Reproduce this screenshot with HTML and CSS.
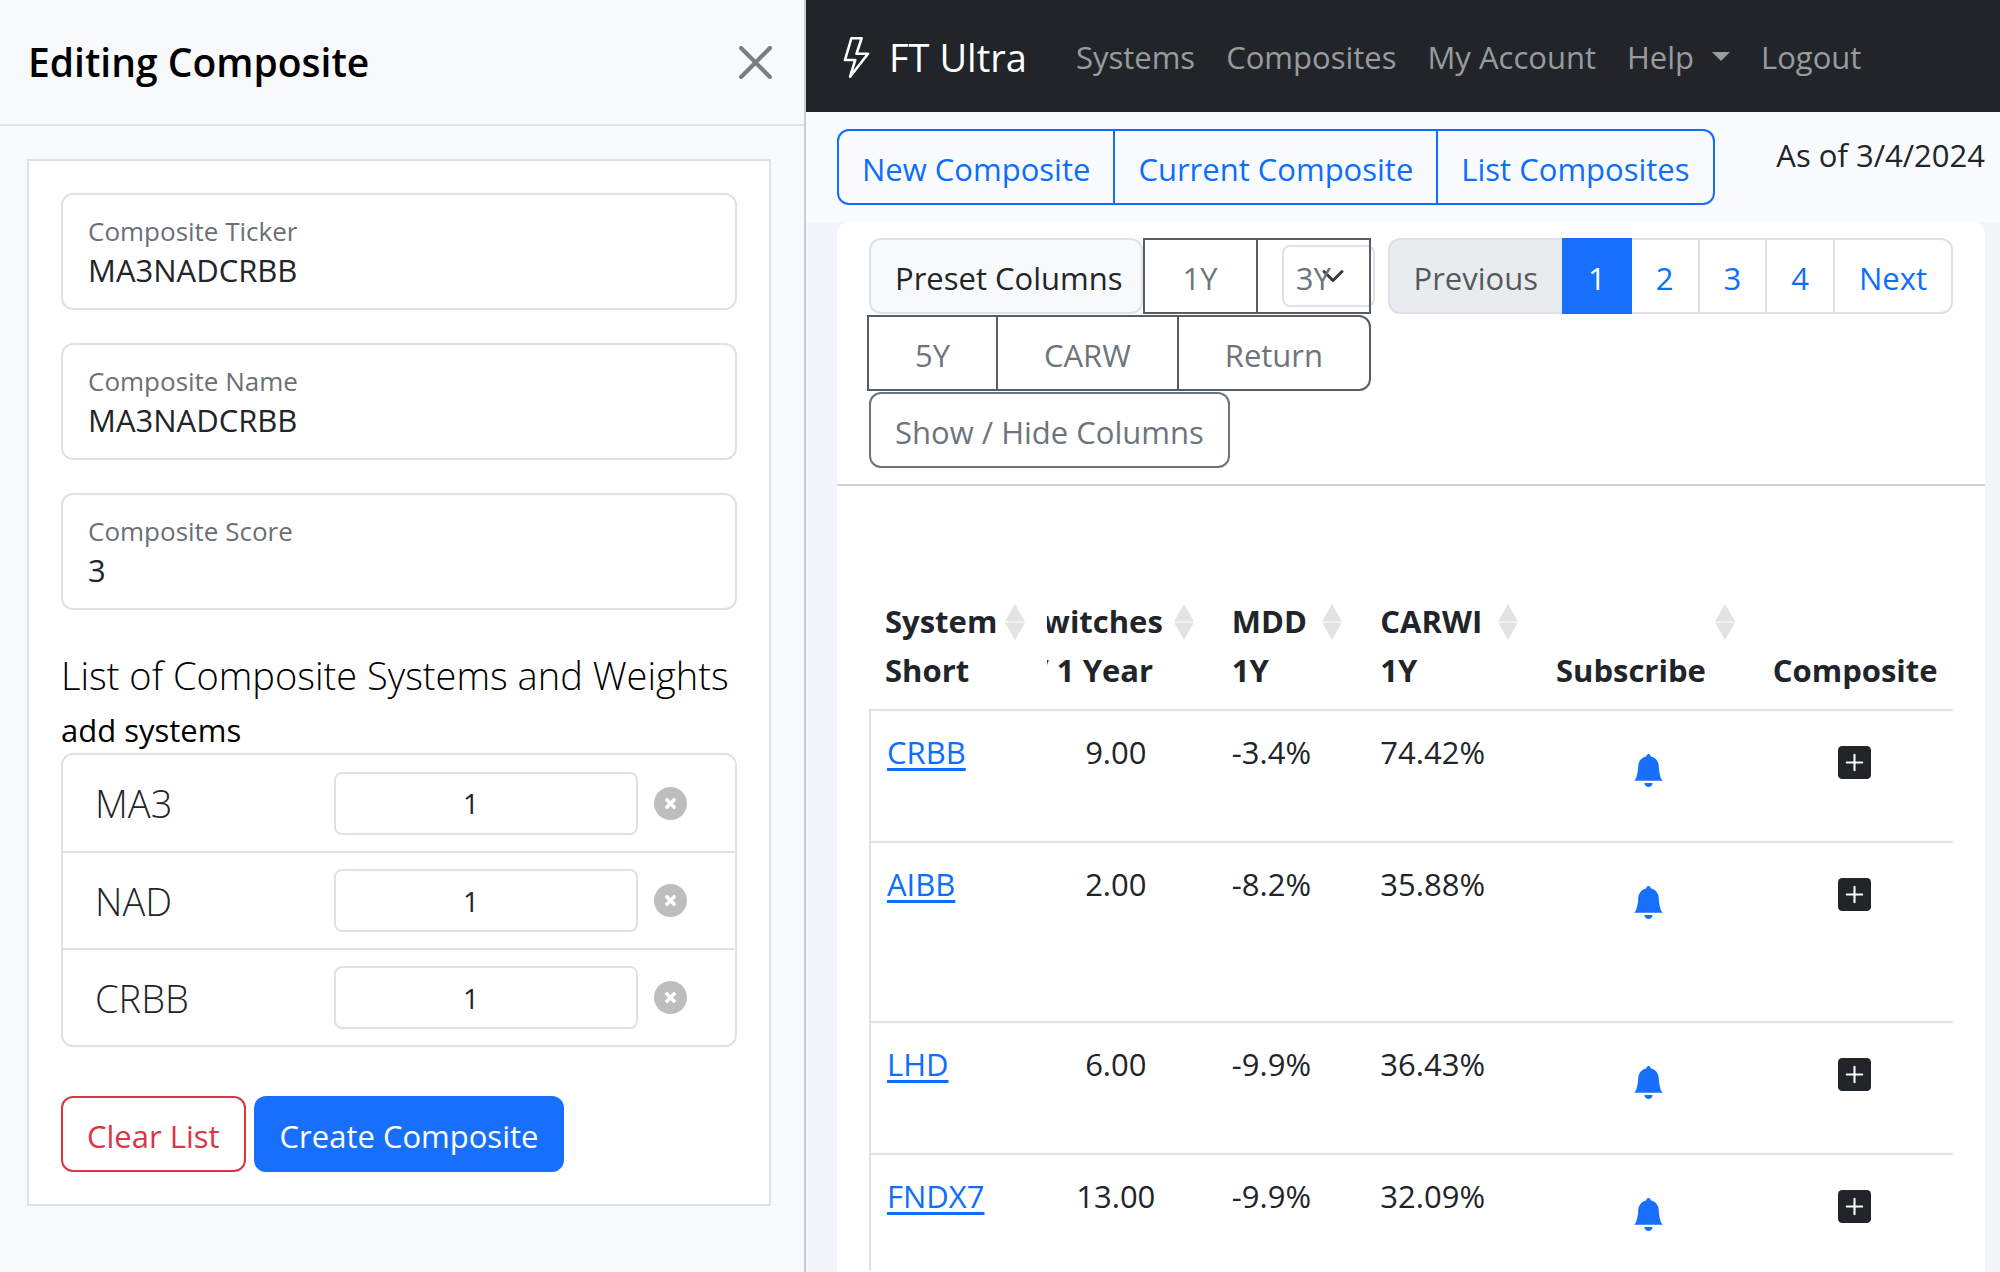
FILE: index.html
```html
<!DOCTYPE html>
<html lang="en">
<head>
<meta charset="utf-8">
<title>FT Ultra - Composites</title>
<link rel="stylesheet" href="styles.css">
</head>
<body>
<svg class="sprite" aria-hidden="true">
  <symbol id="bolt" viewBox="0 0 16 16"><path d="M5.52.359A.5.5 0 0 1 6 0h4a.5.5 0 0 1 .474.658L8.694 6H12.500a.5.5 0 0 1 .395.807l-7 9a.5.5 0 0 1-.873-.454L6.823 9.500H3.500a.5.5 0 0 1-.48-.641zM6.374 1 4.168 8.500H7.500a.5.5 0 0 1 .478.647L6.780 13.040 11.478 7H8a.5.5 0 0 1-.474-.658L9.306 1z"/></symbol>
  <symbol id="close" viewBox="0 0 16 16"><path d="M.293.293a1 1 0 0 1 1.414 0L8 6.586 14.293.293a1 1 0 1 1 1.414 1.414L9.414 8l6.293 6.293a1 1 0 0 1-1.414 1.414L8 9.414l-6.293 6.293a1 1 0 0 1-1.414-1.414L6.586 8 .293 1.707a1 1 0 0 1 0-1.414z"/></symbol>
  <symbol id="remove" viewBox="0 0 32 32"><circle cx="16" cy="16" r="16" fill="#bdbdbd"/><path d="M11.500 11.500l9 9M20.500 11.500l-9 9" stroke="#fff" stroke-width="3.400"/></symbol>
  <symbol id="bell" viewBox="0 0 16 16"><path d="M8 16a2 2 0 0 0 2-2H6a2 2 0 0 0 2 2m.995-14.901a1 1 0 1 0-1.990 0A5 5 0 0 0 3 6c0 1.098-.5 6-2 7h14c-1.500-1-2-5.902-2-7 0-2.420-1.720-4.440-4.005-4.901"/></symbol>
  <symbol id="plus" viewBox="0 0 32 32"><rect width="32" height="32" rx="4" fill="#212529"/><path d="M16 8.500v15M8.500 16h15" stroke="#fff" stroke-width="2" stroke-linecap="round"/></symbol>
  <symbol id="sort" viewBox="0 0 20 36"><path d="M10 0l10 17.500H0zM0 18.500h20L10 36z" fill="#e2e4e4"/></symbol>
  <symbol id="chevron" viewBox="0 0 16 16"><path d="m2 5 6 6 6-6" fill="none" stroke="#343a40" stroke-width="2" stroke-linecap="round" stroke-linejoin="round"/></symbol>
</svg>
<div class="app">
  <aside class="panel" aria-labelledby="panel-title">
    <header class="panel-header">
      <h2 class="panel-title" id="panel-title">Editing Composite</h2>
      <button class="icon-button close-button" type="button" aria-label="Close"><svg><use href="#close"/></svg></button>
    </header>
    <form class="editor">
      <div class="field">
        <label for="ticker">Composite Ticker</label>
        <input id="ticker" type="text" value="MA3NADCRBB">
      </div>
      <div class="field">
        <label for="name">Composite Name</label>
        <input id="name" type="text" value="MA3NADCRBB">
      </div>
      <div class="field">
        <label for="score">Composite Score</label>
        <input id="score" type="text" value="3">
      </div>
      <h3 class="list-title">List of Composite Systems and Weights</h3>
      <p class="list-hint">add systems</p>
      <ul class="systems">
        <li>
          <label for="weight-ma3">MA3</label>
          <input id="weight-ma3" type="text" value="1">
          <button class="icon-button" type="button" aria-label="Remove MA3"><svg><use href="#remove"/></svg></button>
        </li>
        <li>
          <label for="weight-nad">NAD</label>
          <input id="weight-nad" type="text" value="1">
          <button class="icon-button" type="button" aria-label="Remove NAD"><svg><use href="#remove"/></svg></button>
        </li>
        <li>
          <label for="weight-crbb">CRBB</label>
          <input id="weight-crbb" type="text" value="1">
          <button class="icon-button" type="button" aria-label="Remove CRBB"><svg><use href="#remove"/></svg></button>
        </li>
      </ul>
      <div class="actions">
        <button class="btn btn-danger" type="button">Clear List</button>
        <button class="btn btn-primary" type="button">Create Composite</button>
      </div>
    </form>
  </aside>
  <div class="content">
    <nav class="navbar">
      <a class="brand" href="#"><svg><use href="#bolt"/></svg>FT Ultra</a>
      <a href="#">Systems</a>
      <a href="#">Composites</a>
      <a href="#">My Account</a>
      <a class="dropdown" href="#">Help</a>
      <a href="#">Logout</a>
    </nav>
    <div class="toolbar">
      <div class="group">
        <button class="btn btn-outline" type="button">New Composite</button>
        <button class="btn btn-outline" type="button">Current Composite</button>
        <button class="btn btn-outline" type="button">List Composites</button>
      </div>
      <span class="as-of">As of 3/4/2024</span>
    </div>
    <main class="stage">
      <section class="card">
        <div class="card-header">
          <div class="presets">
            <div class="preset-row">
              <span class="btn preset-label">Preset Columns</span>
              <button class="btn preset" type="button">1Y</button>
              <div class="preset-slot">
                <select class="page-size" aria-label="Rows per page"><option></option></select>
                <svg class="chevron"><use href="#chevron"/></svg>
                <button class="btn preset" type="button">3Y</button>
              </div>
            </div>
            <div class="preset-row preset-row-last">
              <button class="btn preset" type="button">5Y</button>
              <button class="btn preset" type="button">CARW</button>
              <button class="btn preset" type="button">Return</button>
            </div>
            <button class="btn btn-secondary" type="button">Show / Hide Columns</button>
          </div>
          <nav class="pagination" aria-label="Pages">
            <a class="disabled" href="#">Previous</a>
            <a class="active" href="#">1</a>
            <a href="#">2</a>
            <a href="#">3</a>
            <a href="#">4</a>
            <a href="#">Next</a>
          </nav>
        </div>
        <table class="grid">
          <colgroup><col class="c-system"><col class="c-switches"><col class="c-mdd"><col class="c-carwi"><col class="c-subscribe"><col class="c-composite"></colgroup>
          <thead>
            <tr>
              <th><div class="head"><span>System<br>Short</span><svg><use href="#sort"/></svg></div></th>
              <th><div class="head head-clipped"><span>Switches<br>/ 1 Year</span><svg><use href="#sort"/></svg></div></th>
              <th><div class="head"><span>MDD<br>1Y</span><svg><use href="#sort"/></svg></div></th>
              <th><div class="head"><span>CARWI<br>1Y</span><svg><use href="#sort"/></svg></div></th>
              <th><div class="head"><span><br>Subscribe</span><svg><use href="#sort"/></svg></div></th>
              <th><div class="head"><span><br>Composite</span></div></th>
            </tr>
          </thead>
          <tbody>
            <tr>
              <td><a href="#">CRBB</a></td><td class="num">9.00</td><td>-3.4%</td><td>74.42%</td>
              <td class="bell-cell"><button class="icon-button" type="button" aria-label="Subscribe to CRBB"><svg><use href="#bell"/></svg></button></td>
              <td class="plus-cell"><button class="icon-button" type="button" aria-label="Add CRBB"><svg><use href="#plus"/></svg></button></td>
            </tr>
            <tr class="tall">
              <td><a href="#">AIBB</a></td><td class="num">2.00</td><td>-8.2%</td><td>35.88%</td>
              <td class="bell-cell"><button class="icon-button" type="button" aria-label="Subscribe to AIBB"><svg><use href="#bell"/></svg></button></td>
              <td class="plus-cell"><button class="icon-button" type="button" aria-label="Add AIBB"><svg><use href="#plus"/></svg></button></td>
            </tr>
            <tr>
              <td><a href="#">LHD</a></td><td class="num">6.00</td><td>-9.9%</td><td>36.43%</td>
              <td class="bell-cell"><button class="icon-button" type="button" aria-label="Subscribe to LHD"><svg><use href="#bell"/></svg></button></td>
              <td class="plus-cell"><button class="icon-button" type="button" aria-label="Add LHD"><svg><use href="#plus"/></svg></button></td>
            </tr>
            <tr class="last">
              <td><a href="#">FNDX7</a></td><td class="num">13.00</td><td>-9.9%</td><td>32.09%</td>
              <td class="bell-cell"><button class="icon-button" type="button" aria-label="Subscribe to FNDX7"><svg><use href="#bell"/></svg></button></td>
              <td class="plus-cell"><button class="icon-button" type="button" aria-label="Add FNDX7"><svg><use href="#plus"/></svg></button></td>
            </tr>
          </tbody>
        </table>
      </section>
    </main>
  </div>
</div>
</body>
</html>
```
FILE: styles.css
```css
:root {
  --blue: #0d6efd;
  --ink: #212529;
  --gray: #6c757d;
  --line: #dee2e6;
}

* {
  box-sizing: border-box;
}

body {
  margin: 0;
  font: 400 31px/48px "Open Sans", "Noto Sans", sans-serif;
  color: var(--ink);
  background: #fafbff;
}

input,
button,
select {
  font: inherit;
  color: inherit;
}

.sprite {
  position: absolute;
  width: 0;
  height: 0;
}

.app {
  display: grid;
  grid-template-columns: 403fr 597fr;
  min-height: 100vh;
}

.icon-button {
  display: block;
  padding: 0;
  border: 0;
  background: none;
}

.icon-button svg {
  display: block;
  width: 33px;
  height: 33px;
}

/* Buttons */

.btn {
  height: 76px;
  padding: 3px 24px 0;
  border: 2px solid;
  border-radius: 12px;
  background: none;
  white-space: nowrap;
}

.btn-danger {
  color: #dc3545;
}

.btn-primary {
  border-color: #186ffb;
  background: #186ffb;
  color: #fff;
}

.btn-outline {
  color: var(--blue);
}

.btn-secondary {
  color: var(--gray);
}

.group {
  display: flex;
}

.group .btn {
  padding-right: 23px;
  padding-left: 23px;
}

.group .btn + .btn {
  margin-left: -2px;
}

.group .btn:not(:last-child) {
  border-top-right-radius: 0;
  border-bottom-right-radius: 0;
}

.group .btn:not(:first-child) {
  border-top-left-radius: 0;
  border-bottom-left-radius: 0;
}

/* Editing panel */

.panel {
  min-width: 0;
  border-right: 2px solid #c9ccd0;
  background: #f8f9fb;
}

.panel-header {
  display: flex;
  align-items: center;
  justify-content: space-between;
  height: 126px;
  padding: 0 32px 0 28px;
  border-bottom: 2px solid var(--line);
}

.panel-title {
  margin: 0;
  font-size: 39px;
  font-weight: 600;
  color: #000;
}

.close-button svg {
  fill: #7c7d7e;
}

.editor {
  margin: 33px 33px 0 27px;
  padding: 32px;
  border: 2px solid var(--line);
  background: #fff;
}

.field {
  display: flex;
  flex-direction: column;
  height: 117px;
  margin-bottom: 33px;
  padding: 18px 25px;
  border: 2px solid var(--line);
  border-radius: 12px;
}

.field label {
  font-size: 26px;
  line-height: 36px;
  color: #6b7075;
}

.field input {
  width: 100%;
  height: 42px;
  padding: 0;
  border: 0;
  background: none;
}

.list-title {
  margin: 0;
  font-size: 38px;
  font-weight: 300;
  line-height: 64px;
  color: #000;
  white-space: nowrap;
}

.list-hint {
  margin: 0;
  line-height: 46px;
  color: #000;
}

.systems {
  margin: 0 0 49px;
  padding: 0;
  border: 2px solid var(--line);
  border-radius: 12px;
  list-style: none;
}

.systems li {
  display: grid;
  grid-template-columns: 239fr 303fr 97fr;
  align-items: center;
  height: 96px;
  padding-left: 32px;
}

.systems li + li {
  height: 97px;
  border-top: 2px solid var(--line);
}

.systems label {
  font-size: 38px;
  font-weight: 300;
}

.systems input {
  width: 100%;
  height: 63px;
  padding: 0 30px 0 0;
  border: 2px solid var(--line);
  border-radius: 8px;
  font-size: 28px;
  text-align: center;
}

.systems .icon-button {
  margin-left: 16px;
}

.actions {
  display: flex;
  gap: 8px;
}

/* Main content */

.content {
  display: flex;
  flex-direction: column;
  min-width: 0;
}

.navbar {
  display: flex;
  align-items: center;
  gap: 31px;
  height: 112px;
  padding: 2px 32px 0 30px;
  background: var(--ink);
}

.navbar a {
  color: #999b9d;
  text-decoration: none;
  white-space: nowrap;
}

.navbar .brand {
  display: flex;
  align-items: center;
  gap: 12px;
  margin-right: 18px;
  font-size: 38px;
  color: #fff;
}

.brand svg {
  width: 41px;
  height: 41px;
  fill: #fff;
}

.dropdown::after {
  content: "";
  display: inline-block;
  margin-left: 18px;
  border: 9px solid transparent;
  border-top-color: currentColor;
  border-bottom: 0;
  vertical-align: 8px;
}

.toolbar {
  display: flex;
  justify-content: space-between;
  align-items: flex-start;
  height: 110px;
  padding: 17px 15px 0 31px;
}

.as-of {
  line-height: 52px;
}

.stage {
  flex: 1;
  padding: 0 15px 0 31px;
  background: #f4f5fa;
}

.card {
  min-height: 100%;
  border-radius: 12px 12px 0 0;
  background: #fff;
}

.card-header {
  display: flex;
  justify-content: space-between;
  align-items: flex-start;
  padding: 16px 32px;
  border-bottom: 2px solid #d2d3d4;
}

.presets {
  flex: 0 0 502px;
}

.preset-row {
  display: flex;
  height: 77px;
}

.preset-row-last {
  margin-left: -2px;
}

.preset-label {
  display: flex;
  align-items: center;
  padding-right: 18px;
  border-color: var(--line);
  background: #f8f9fa;
}

.preset {
  flex: 1 1 auto;
  border-color: #565e64;
  border-radius: 0;
  color: var(--gray);
}

.preset + .preset {
  margin-left: -2px;
}

.preset-row-last .preset:last-child {
  border-radius: 0 12px 12px 0;
}

.preset-slot {
  display: flex;
  flex: 1 1 auto;
  position: relative;
  margin-left: -2px;
}

.preset-slot .preset {
  position: relative;
}

.page-size {
  position: absolute;
  top: 7px;
  right: -4px;
  width: 93px;
  height: 62px;
  border: 2px solid var(--line);
  border-radius: 8px;
  background: none;
  appearance: none;
}

.chevron {
  position: absolute;
  top: 26px;
  right: 26px;
  width: 24px;
  height: 24px;
}

.pagination {
  display: flex;
}

.pagination a {
  height: 76px;
  margin-left: -2px;
  padding: 0 24px;
  border: 2px solid var(--line);
  line-height: 76px;
  color: var(--blue);
  text-decoration: none;
}

.pagination .disabled {
  border-radius: 12px 0 0 12px;
  background: #e9ecef;
  color: #55595d;
}

.pagination .active {
  z-index: 1;
  border-color: #186ffb;
  background: #186ffb;
  color: #fff;
}

.pagination a:last-child {
  border-radius: 0 12px 12px 0;
}

/* Systems table */

.grid {
  width: calc(100% - 64px);
  margin: 0 32px;
  border-collapse: separate;
  border-spacing: 0;
  table-layout: fixed;
}

.c-system { width: 16.4%; }
.c-switches { width: 15.6%; }
.c-mdd { width: 13.7%; }
.c-carwi { width: 16.2%; }
.c-subscribe { width: 20%; }
.c-composite { width: 18.1%; }

.grid th {
  height: 225px;
  padding: 0 0 14px;
  border-bottom: 2px solid var(--line);
  font-weight: 700;
  line-height: 49px;
  text-align: left;
  vertical-align: bottom;
}

.head {
  display: flex;
  justify-content: space-between;
  padding: 0 22px 0 16px;
  white-space: nowrap;
}

.head svg {
  flex: none;
  width: 20px;
  height: 36px;
  margin-top: 7px;
}

.head-clipped {
  justify-content: flex-end;
  gap: 11px;
  overflow: hidden;
  text-align: center;
}

.grid td {
  height: 132px;
  padding: 16px;
  border-bottom: 2px solid var(--line);
  line-height: 50px;
  vertical-align: top;
}

.grid td:first-child {
  border-left: 2px solid var(--line);
}

.grid td a {
  color: var(--blue);
  text-underline-offset: 4px;
}

.grid .tall td {
  height: 180px;
}

.grid .last td {
  height: 116px;
  padding-bottom: 0;
  border-bottom: 0;
}

.grid .num {
  padding-right: 47px;
  text-align: center;
}

.grid .bell-cell {
  padding-top: 43px;
}

.grid .plus-cell {
  padding-top: 35px;
}

.grid .icon-button {
  margin: 0 auto;
}

.bell-cell svg {
  fill: #186ffb;
}
```
